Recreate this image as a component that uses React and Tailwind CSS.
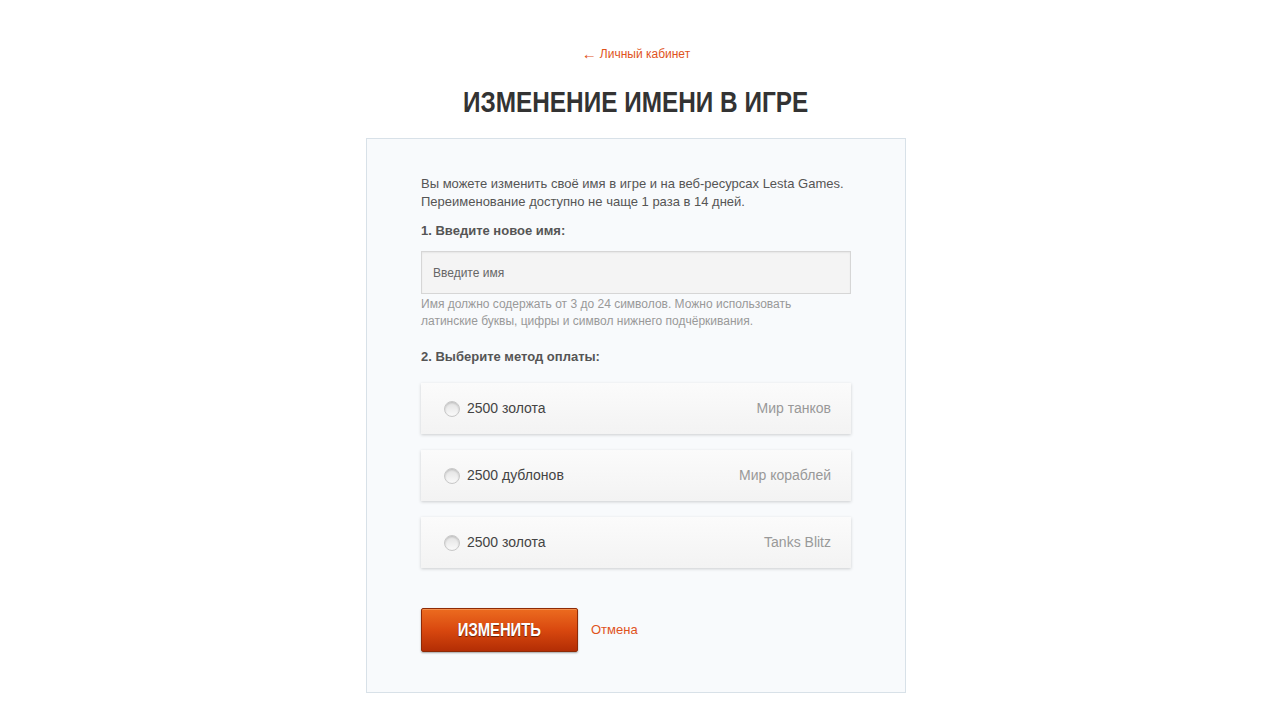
import React from "react";

const options = [
  { amount: "2500 золота", game: "Мир танков" },
  { amount: "2500 дублонов", game: "Мир кораблей" },
  { amount: "2500 золота", game: "Tanks Blitz" },
];

function Radio() {
  return (
    <span className="w-[16px] h-[16px] rounded-full border border-[#c8c8c8] bg-gradient-to-b from-[#e2e2e2] to-[#fafafa] shadow-[inset_0_1px_2px_rgba(0,0,0,0.18)] shrink-0" />
  );
}

export default function App() {
  return (
    <div className="min-h-[720px] bg-white flex flex-col items-center pt-[46px] pr-[15px] pb-[27px] font-['Liberation_Sans',Arial,sans-serif]">
      <a className="text-[12px] leading-[16px] text-[#e0531c] flex items-center">
        <span className="text-[15px] leading-[16px] mr-[3px]">←</span>Личный кабинет
      </a>
      <h1 className="mt-[22px] text-[29px] leading-[36px] font-bold text-[#333] scale-x-[0.84] whitespace-nowrap">
        ИЗМЕНЕНИЕ ИМЕНИ В ИГРЕ
      </h1>
      <div className="mt-[18px] w-[540px] border border-[#d8e1e8] bg-[#f8fafc] pt-[36px] pb-[40px] px-[54px]">
        <p className="text-[13px] leading-[18px] text-[#555]">
          Вы можете изменить своё имя в игре и на веб-ресурсах Lesta Games.
          <br />
          Переименование доступно не чаще 1 раза в 14 дней.
        </p>
        <div className="mt-[11px] text-[13px] leading-[18px] font-bold text-[#555]">1. Введите новое имя:</div>
        <div className="mt-[11px] h-[43px] border border-[#d6d6d6] bg-[#f4f4f4] flex items-center px-[11px] shadow-[inset_0_1px_2px_rgba(0,0,0,0.06)]">
          <span className="text-[12px] text-[#666]">Введите имя</span>
        </div>
        <p className="mt-[2px] text-[12px] leading-[17px] text-[#999]">
          Имя должно содержать от 3 до 24 символов. Можно использовать
          <br />
          латинские буквы, цифры и символ нижнего подчёркивания.
        </p>
        <div className="mt-[18px] text-[13px] leading-[18px] font-bold text-[#555]">2. Выберите метод оплаты:</div>
        <div className="mt-[17px] flex flex-col gap-[16px]">
          {options.map((o, i) => (
            <div
              key={i}
              className="h-[51px] flex items-center pl-[23px] pr-[20px] bg-gradient-to-b from-[#fbfbfb] to-[#f3f3f3] shadow-[0_1px_3px_rgba(0,0,0,0.18)]"
            >
              <Radio />
              <span className="ml-[7px] text-[14px] text-[#444]">{o.amount}</span>
              <span className="ml-auto text-[14px] text-[#999]">{o.game}</span>
            </div>
          ))}
        </div>
        <div className="mt-[40px] flex items-center">
          <button className="w-[157px] h-[44px] rounded-[2px] border border-[#8e2a06] bg-gradient-to-b from-[#ec6b1f] via-[#d9480f] to-[#b32d05] shadow-[0_1px_2px_rgba(0,0,0,0.35),inset_0_1px_0_rgba(255,200,150,0.4)] text-white [text-shadow:0_1px_1px_rgba(0,0,0,0.5)]">
            <span className="inline-block text-[19px] font-bold scale-x-[0.78] whitespace-nowrap">ИЗМЕНИТЬ</span>
          </button>
          <a className="ml-[13px] text-[13px] text-[#e0531c]">Отмена</a>
        </div>
      </div>
    </div>
  );
}
